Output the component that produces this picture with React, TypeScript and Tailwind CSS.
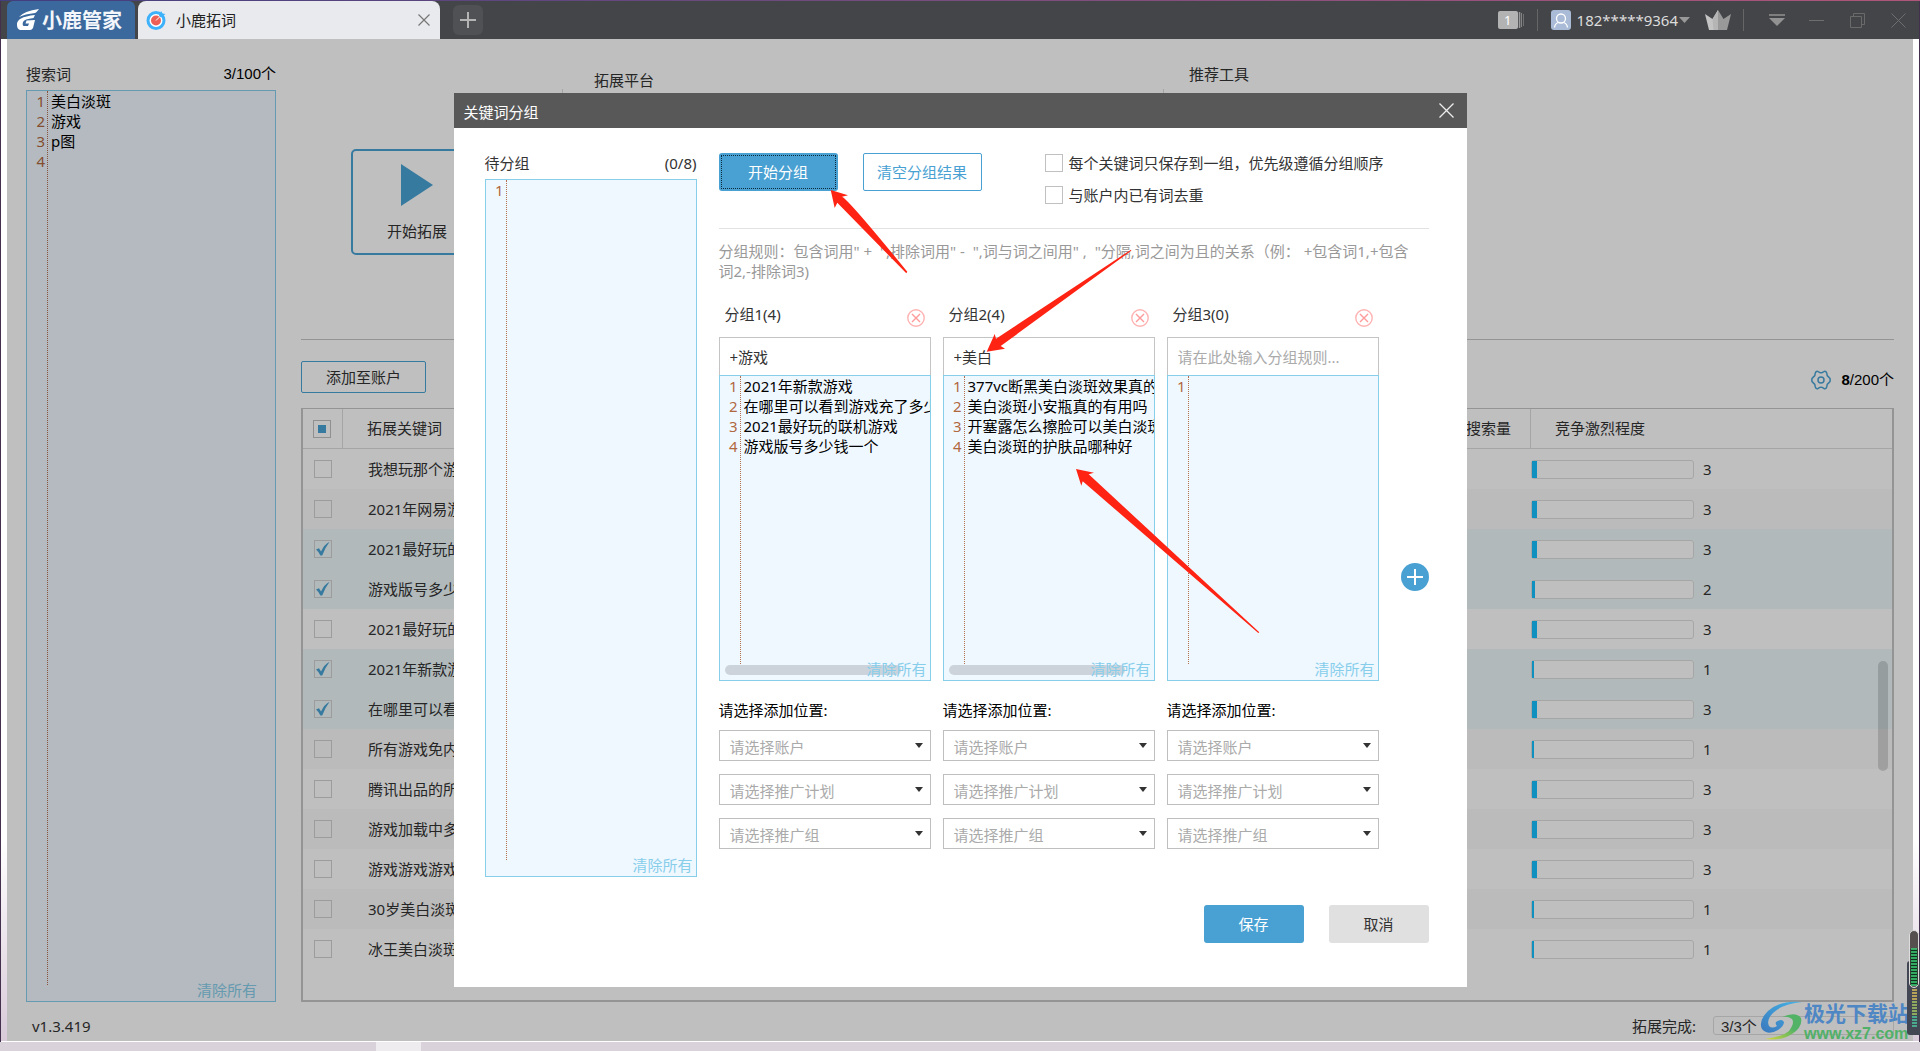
import React from 'react';

type Row = { word: string; level: number; checked: boolean };

const rows: Row[] = [
  { word: '我想玩那个游戏', level: 3, checked: false },
  { word: '2021年网易游戏', level: 3, checked: false },
  { word: '2021最好玩的联机游戏', level: 3, checked: true },
  { word: '游戏版号多少钱一个', level: 2, checked: true },
  { word: '2021最好玩的游戏', level: 3, checked: false },
  { word: '2021年新款游戏', level: 1, checked: true },
  { word: '在哪里可以看到游戏', level: 3, checked: true },
  { word: '所有游戏免内购', level: 1, checked: false },
  { word: '腾讯出品的所有游戏', level: 3, checked: false },
  { word: '游戏加载中多久', level: 3, checked: false },
  { word: '游戏游戏游戏', level: 3, checked: false },
  { word: '30岁美白淡斑', level: 1, checked: false },
  { word: '冰王美白淡斑膏', level: 1, checked: false },
];

const groups = [
  {
    title: '分组1(4)',
    rule: '+游戏',
    words: ['2021年新款游戏', '在哪里可以看到游戏充了多少钱', '2021最好玩的联机游戏', '游戏版号多少钱一个'],
  },
  {
    title: '分组2(4)',
    rule: '+美白',
    words: ['377vc断黑美白淡斑效果真的好吗', '美白淡斑小安瓶真的有用吗', '开塞露怎么擦脸可以美白淡斑吗', '美白淡斑的护肤品哪种好'],
  },
  { title: '分组3(0)', rule: '', words: [] as string[] },
];

const barWidth: Record<number, string> = { 1: 'w-[2px]', 2: 'w-[3px]', 3: 'w-[5px]' };

function Editor({
  label,
  lines,
  count,
  size,
  clearPos = 'right-[3px]',
  scroll = false,
}: {
  label: string;
  lines: string[];
  count: number;
  size: string;
  clearPos?: string;
  scroll?: boolean;
}) {
  return (
    <div className={`relative flex border border-[#87ceeb] bg-[#f0f8ff] pb-4 ${size}`}>
      <div className="w-[21px] shrink-0 border-r border-dotted border-[#b5714f] pr-[2px] text-right leading-5 text-[#b0683f]">
        {Array.from({ length: count }, (_, i) => (
          <div key={i}>{i + 1}</div>
        ))}
      </div>
      <textarea
        aria-label={label}
        wrap="off"
        defaultValue={lines.join('\n')}
        className="min-w-0 flex-1 resize-none overflow-hidden bg-transparent pl-[3px] leading-5 text-black outline-none"
      />
      {scroll && <div className="absolute bottom-[5px] left-[5px] h-[10px] w-[176px] rounded-full bg-[#cdd3da]" />}
      <button className={`absolute bottom-px leading-5 text-[#87ceeb] ${clearPos}`}>清除所有</button>
    </div>
  );
}

function Tick({ label, checked = false }: { label: string; checked?: boolean }) {
  return (
    <span className="relative block size-[18px]">
      <input
        type="checkbox"
        aria-label={label}
        defaultChecked={checked}
        className="peer block size-[18px] appearance-none border border-[#d0d0d0]"
      />
      <svg viewBox="0 0 18 18" className="pointer-events-none absolute inset-0 hidden size-[18px] peer-checked:block">
        <path d="M2 9.4 L5 8.2 L7 11.6 Q10 4.5 15.6 1.7 Q11.5 7 8.2 15.4 L6.4 15.6 Q4.8 11.6 2 9.4Z" fill="#4aa3d4" />
      </svg>
    </span>
  );
}

function TitleBar() {
  return (
    <header className="flex h-[38px] items-end bg-[#444548] pr-[13px] pl-[6px]">
      <div className="flex h-[38px] w-[128px] items-center rounded-t-md bg-[#3b699d] pl-[9px]">
        <svg viewBox="0 0 24 24" className="size-6 shrink-0">
          <path d="M3 9 Q8 3 23 1 Q20 5 19 5 Q9 6 3 9Z" fill="#fff" />
          <path
            d="M1 17 Q0 9 19 7 L17.500 10 Q8 11 7 14 Q6 18 8 18 L12 18 L13 15.500 L9.500 15.500 L10.500 12.500 L19 12 L17 20 Q16 22 14 22 L4 22 Q1 21 1 17Z"
            fill="#fff"
          />
        </svg>
        <span className="ml-[2px] pt-px text-[20px] leading-6 font-bold whitespace-nowrap text-[#f3f6fa]">小鹿管家</span>
      </div>
      <div className="ml-[3px] flex h-[38px] w-[302px] items-center rounded-t-lg bg-[#e9eaee] pr-[10px] pl-2">
        <svg viewBox="0 0 20 20" className="size-5 shrink-0">
          <circle cx="10" cy="10.500" r="8" fill="#fff" stroke="#3db2fb" strokeWidth="3" />
          <circle cx="10" cy="10.500" r="5" fill="#ee5f55" />
          <path d="M10 10.500 L16 4.500" stroke="#fff" strokeWidth="1" />
          <path d="M13 6 L15 1 L16.500 3.500 L19.500 4 L15 7.500Z" fill="#3db2fb" />
        </svg>
        <span className="ml-[10px] leading-5 text-[#222]">小鹿拓词</span>
        <button aria-label="关闭标签" className="ml-auto">
          <svg viewBox="0 0 12 12" className="size-3">
            <path d="M.5 .5 L11.500 11.500 M11.500 .5 L.5 11.500" stroke="#777" strokeWidth="1.200" />
          </svg>
        </button>
      </div>
      <button aria-label="新建标签" className="mb-1 ml-[13px] flex size-[30px] items-center justify-center rounded-md bg-[#505155]">
        <svg viewBox="0 0 16 16" className="size-4">
          <path d="M8 0 V16 M0 8 H16" stroke="#b4b4b4" strokeWidth="2" />
        </svg>
      </button>
      <div className="ml-auto flex h-[38px] items-center">
        <svg viewBox="0 0 26 18" className="h-[18px] w-[26px]">
          <rect width="20" height="18" rx="2" fill="#b3b3b3" />
          <path d="M21.500 1 V17" stroke="#9a9a9a" strokeWidth="1.500" />
          <path d="M23.500 2 V16" stroke="#858585" />
          <path d="M25.500 3 V15" stroke="#707070" />
          <text x="6" y="14" fontSize="13" fill="#fff" fontFamily="Noto Sans">
            1
          </text>
        </svg>
        <i className="ml-[13px] h-[22px] w-px bg-[#666]" />
        <svg viewBox="0 0 20 20" className="ml-[13px] size-5">
          <rect width="20" height="20" rx="3" fill="#a9bbd7" />
          <circle cx="10" cy="8.500" r="4.500" fill="none" stroke="#fff" strokeWidth="1.300" />
          <path d="M3.500 17.500 Q4 13.500 7.500 12.500 M16.500 17.500 Q16 13.500 12.500 12.500" fill="none" stroke="#fff" strokeWidth="1.300" />
        </svg>
        <button className="ml-[6px] flex items-center gap-px leading-5 text-[#dcdcdc]">
          182*****9364
          <svg viewBox="0 0 11 6" className="h-[6px] w-[11px]">
            <path d="M0 0 H11 L5.500 6Z" fill="#999" />
          </svg>
        </button>
        <svg viewBox="0 0 26 20" className="ml-[15px] h-5 w-[26px]">
          <path d="M0 4 L7.500 9 L13 0 L13 20 L4 20Z" fill="#c4c4c4" />
          <path d="M26 4 L18.500 9 L13 0 L13 20 L22 20Z" fill="#999" />
          <path d="M7.500 9 L13 0 L13 20 L8.500 20Z" fill="#b5b5b5" />
        </svg>
        <i className="ml-[12px] h-[22px] w-px bg-[#666]" />
        <button aria-label="菜单" className="ml-[25px]">
          <svg viewBox="0 0 16 12" className="h-3 w-4">
            <path d="M0 1 H16" stroke="#929292" strokeWidth="1.500" />
            <path d="M0 4 H16 L8 12Z" fill="#929292" />
          </svg>
        </button>
        <button aria-label="最小化" className="ml-6 h-[15px] w-[15px]">
          <span className="block h-px w-full bg-[#6e6e6e]" />
        </button>
        <button aria-label="还原" className="ml-[26px]">
          <svg viewBox="0 0 15 15" className="size-[15px]">
            <path d="M.5 3.500 H11.500 V14.500 H.5Z M3.500 3.500 V.5 H14.500 V11.500 H11.500" fill="none" stroke="#6a6a6a" />
          </svg>
        </button>
        <button aria-label="关闭" className="ml-[26px]">
          <svg viewBox="0 0 15 15" className="size-[15px]">
            <path d="M.5 .5 L14.500 14.500 M14.500 .5 L.5 14.500" stroke="#6e6e6e" />
          </svg>
        </button>
      </div>
    </header>
  );
}

function ResultTable() {
  return (
    <div className="relative flex-1 border-2 border-t border-[#c6c6c6]">
      <table className="w-full table-fixed border-separate border-spacing-0 text-[#333]">
        <colgroup>
          <col className="w-10" />
          <col />
          <col className="w-[200px]" />
          <col className="w-[361px]" />
        </colgroup>
        <thead>
          <tr className="h-10 [&>th]:border-b [&>th]:border-[#dcdcdc] [&>th]:font-normal">
            <th className="border-r pl-[10px]">
              <span className="relative block size-[18px]">
                <input type="checkbox" aria-label="全选" className="block size-[18px] appearance-none border border-[#c0c0c0]" />
                <span className="pointer-events-none absolute top-[5px] left-[5px] size-2 bg-[#4aa3d4]" />
              </span>
            </th>
            <th className="pl-6 text-left">拓展关键词</th>
            <th className="border-r pr-[19px] text-right">月均搜索量</th>
            <th className="pl-6 text-left">竞争激烈程度</th>
          </tr>
        </thead>
        <tbody>
          {rows.map((r) => (
            <tr key={r.word} className={`h-10 ${r.checked ? 'bg-[#ecf7fa]' : 'even:bg-[#fafafa]'}`}>
              <td className="pl-[11px]">
                <Tick label={r.word} checked={r.checked} />
              </td>
              <td className="pl-[25px] whitespace-nowrap">{r.word}</td>
              <td />
              <td>
                <div className="flex items-center gap-[9px]">
                  <div className="h-[19px] w-[163px] rounded-[3px] border border-[#dedede] bg-white">
                    <div className={`h-full bg-[#15c0ff] ${barWidth[r.level]}`} />
                  </div>
                  <span className="leading-5">{r.level}</span>
                </div>
              </td>
            </tr>
          ))}
        </tbody>
      </table>
      <div className="absolute top-[252px] right-1 h-[110px] w-[10px] rounded-full bg-black/15" />
    </div>
  );
}

function Picker({ label }: { label: string }) {
  return (
    <div className="relative">
      <select
        aria-label={label}
        className="block h-[31px] w-full appearance-none border border-[#bfbfbf] bg-white pt-[3px] pl-[10px] text-[#aaa] outline-none"
      >
        <option>{label}</option>
      </select>
      <svg viewBox="0 0 8 5" className="pointer-events-none absolute top-[13px] right-2 h-[5px] w-2">
        <path d="M0 0 H8 L4 5Z" fill="#333" />
      </svg>
    </div>
  );
}

function GroupDialog() {
  return (
    <div role="dialog" aria-label="关键词分组" className="w-full max-w-[1013px] bg-white text-[#333]">
      <div className="flex h-[35px] items-center justify-between bg-[#585858] pr-[13px] pl-[10px] text-white">
        <h2 className="pt-[2px] leading-5">关键词分组</h2>
        <button aria-label="关闭对话框">
          <svg viewBox="0 0 15 15" className="size-[15px]">
            <path d="M.5 .5 L14.500 14.500 M14.500 .5 L.5 14.500" stroke="#eee" strokeWidth="1.300" />
          </svg>
        </button>
      </div>
      <div className="pt-[25px] pr-[38px] pb-11 pl-[31px]">
        <div className="flex gap-[22px]">
          <div className="flex w-[212px] shrink-0 flex-col">
            <div className="flex h-[26px] justify-between leading-5">
              <span>待分组</span>
              <span>(0/8)</span>
            </div>
            <Editor label="待分组" lines={[]} count={1} size="min-h-[698px] flex-1" />
          </div>
          <div className="min-w-0 flex-1">
            <div className="flex h-[76px] items-start border-b border-[#e2e2e2]">
              <button className="h-[38px] w-[119px] rounded-[3px] bg-[#48a1d2] p-[2px] text-white">
                <span className="flex h-full items-center justify-center border border-dotted border-[#0d2a3a]">开始分组</span>
              </button>
              <button className="ml-[25px] h-[38px] w-[119px] rounded-[2px] border border-[#48a1d2] text-[#48a1d2]">清空分组结果</button>
              <div className="ml-[63px] flex flex-col gap-3">
                {['每个关键词只保存到一组，优先级遵循分组顺序', '与账户内已有词去重'].map((t) => (
                  <label key={t} className="flex h-5 items-center gap-[6px] whitespace-nowrap">
                    <input type="checkbox" className="size-[18px] appearance-none border border-[#c0c0c0]" />
                    {t}
                  </label>
                ))}
              </div>
            </div>
            <p className="mt-3 leading-5 whitespace-nowrap text-[#999]">
              分组规则：包含词用" +&nbsp; ",排除词用" -&nbsp; ",词与词之间用" ,&nbsp; "分隔,词之间为且的关系（例：&nbsp;+包含词1,+包含
              <br />
              词2,-排除词3)
            </p>
            <div className="mt-[23px] flex">
              <div className="flex gap-3">
                {groups.map((g) => (
                  <section key={g.title} className="flex w-[212px] flex-col">
                    <div className="flex h-[33px] items-start justify-between pr-[6px] pl-[6px]">
                      <h3 className="leading-5">{g.title}</h3>
                      <button aria-label={`删除${g.title}`} className="mt-[5px]">
                        <svg viewBox="0 0 18 18" className="size-[18px]">
                          <circle cx="9" cy="9" r="8.200" fill="none" stroke="#ffb3b3" strokeWidth="1.400" />
                          <path d="M5 5 L13 13 M13 5 L5 13" stroke="#ff9a9a" strokeWidth="1.400" />
                        </svg>
                      </button>
                    </div>
                    <input
                      aria-label={`${g.title}规则`}
                      defaultValue={g.rule}
                      placeholder="请在此处输入分组规则..."
                      className="h-[38px] w-full border border-b-0 border-[#c4c4c4] pl-[10px] outline-none placeholder:text-[#aaa]"
                    />
                    <Editor
                      label={`${g.title}关键词`}
                      lines={g.words}
                      count={Math.max(1, g.words.length)}
                      size="h-[306px]"
                      scroll={g.words.length > 0}
                    />
                    <div className="mt-[19px] mb-[10px] leading-5 text-black">请选择添加位置:</div>
                    <div className="flex flex-col gap-[13px]">
                      <Picker label="请选择账户" />
                      <Picker label="请选择推广计划" />
                      <Picker label="请选择推广组" />
                    </div>
                  </section>
                ))}
              </div>
              <button aria-label="添加分组" className="ml-auto self-center">
                <svg viewBox="0 0 28 28" className="size-7">
                  <circle cx="14" cy="14" r="14" fill="#48a1d2" />
                  <path d="M14 6 V22 M6 14 H22" stroke="#fff" strokeWidth="2" />
                </svg>
              </button>
            </div>
          </div>
        </div>
        <div className="mt-7 flex justify-end gap-[25px]">
          <button className="h-[38px] w-[100px] rounded-[3px] bg-[#48a1d2] text-white">保存</button>
          <button className="h-[38px] w-[100px] rounded-[3px] bg-[#e0e0e0]">取消</button>
        </div>
      </div>
    </div>
  );
}

function Arrows() {
  return (
    <svg viewBox="454 93 1013 894" className="pointer-events-none absolute inset-0 size-full" fill="#ff2313">
      <path d="M830.700 190 L848 195.300 L842 196.700 Q848 199 907.300 271.700 L906.300 273.300 L837.300 202.700 L834.700 208Z" />
      <path d="M986.700 351.700 L994.700 334 L996 338.700 L1131 249.700 L1131.300 250.700 L1000.700 346 L1005 348.700Z" />
      <path d="M1076 469 L1094 472.700 L1088.700 474.300 L1259.300 632.300 L1258.300 632.900 L1082.700 481.300 L1081.300 485.700Z" />
    </svg>
  );
}

function Watermark() {
  return (
    <div className="pointer-events-none absolute right-[11px] bottom-0 flex h-[42px] items-center">
      <svg viewBox="0 0 42 42" className="size-[42px]">
        <defs>
          <linearGradient id="wmBlue" x1="0" y1="1" x2="1" y2="0">
            <stop offset="0" stopColor="#3a78bd" />
            <stop offset="1" stopColor="#45b4e6" />
          </linearGradient>
          <linearGradient id="wmGreen" x1="0" y1="1" x2="1" y2="0">
            <stop offset="0" stopColor="#d5d83c" />
            <stop offset=".6" stopColor="#52b266" />
          </linearGradient>
        </defs>
        <path
          d="M42 2 Q20 0 8 11 Q-2 21 2 29 Q8 36 18 30 Q24 26 24 22 Q22 18 16 22 Q15 24 17 26 Q12 29 9 26 Q6 20 13 13 Q22 4 42 2Z"
          fill="url(#wmBlue)"
        />
        <path d="M22 17 Q36 11 41 18 Q43 27 32 34 Q22 41 5 39 Q22 37 29 31 Q35 23 32 19 Q28 16 22 17Z" fill="url(#wmGreen)" />
      </svg>
      <div className="ml-[2px] pt-[3px] font-bold whitespace-nowrap">
        <div className="text-[21px] leading-[22px] text-[#4e87c4]">极光下载站</div>
        <div className="font-['Liberation_Sans',sans-serif] text-[16px] leading-5 text-[#51b068]">www.xz7.com</div>
      </div>
    </div>
  );
}

function Meter() {
  return (
    <svg viewBox="0 0 13 106" className="pointer-events-none absolute right-0 bottom-[6px] h-[106px] w-[13px]">
      <rect x="0" y="31" width="14" height="74" rx="3" fill="#434754" />
      <rect x="2.500" y=".5" width="9" height="57" rx="4.500" fill="#55504f" stroke="#ddd" />
      <rect x="3.500" y="19" width="7" height="36" fill="#12301f" />
      {Array.from({ length: 13 }, (_, i) => (
        <path key={i} d={`M4 ${19 + i * 3} h6`} stroke="#3fd37a" strokeWidth="1.500" />
      ))}
      {Array.from({ length: 13 }, (_, i) => (
        <path key={i} d={`M5 ${60 + i * 3} h5`} stroke={i < 4 ? '#d8c05a' : i < 9 ? '#a5cc62' : '#4cc9a0'} strokeWidth="1.500" />
      ))}
    </svg>
  );
}

export default function App() {
  return (
    <div className="relative flex min-h-screen flex-col bg-[#dad2da] font-['Noto_Sans','Noto_Sans_CJK_SC',sans-serif] text-[15px] text-[#333]">
      <div className="h-px bg-linear-to-r from-[#413e7e] to-[#b0557a]" />
      <div className="flex flex-1 flex-col border-r border-l border-[#43304f]">
        <TitleBar />
        <div className="flex flex-1 flex-col border-b border-white bg-linear-to-b from-white from-80% to-[#d8cad9] px-[6px]">
          <div className="relative flex flex-1 flex-col bg-white px-[19px]">
            <div className="flex flex-1 gap-[25px]">
              <aside className="flex w-[250px] shrink-0 flex-col">
                <div className="flex items-center justify-between pt-[25px] pb-[6px] leading-5">
                  <span>搜索词</span>
                  <span className="font-['Liberation_Sans','Noto_Sans_CJK_SC',sans-serif] text-black">3/100个</span>
                </div>
                <Editor label="搜索词" lines={['美白淡斑', '游戏', 'p图']} count={4} size="flex-1" clearPos="right-[18px]" />
              </aside>
              <main className="flex min-w-0 flex-1 flex-col">
                <div className="flex h-[301px] border-b border-[#c6c6c6]">
                  <div className="w-[261px] pt-[110px] pl-[50px]">
                    <button className="flex h-[106px] w-[132px] flex-col items-center gap-[15px] rounded-[5px] border-2 border-[#4aa3d4] pt-[13px]">
                      <svg viewBox="0 0 32 42" className="h-[42px] w-8">
                        <path d="M0 0 L32 21 L0 42Z" fill="#4aa3d4" />
                      </svg>
                      <span className="leading-5">开始拓展</span>
                    </button>
                  </div>
                  <i className="mt-[50px] w-px bg-[#dcdcdc]" />
                  <div className="w-[600px] pt-[31px] pl-[31px] leading-5">拓展平台</div>
                  <i className="mt-[50px] w-px bg-[#dcdcdc]" />
                  <div className="pt-[25px] pl-[25px] leading-5">推荐工具</div>
                </div>
                <div className="flex h-[68px] items-start justify-between pt-[21px]">
                  <button className="h-8 w-[125px] rounded-[2px] border border-[#4aa3d4]">添加至账户</button>
                  <div className="flex h-[38px] items-center font-['Liberation_Sans','Noto_Sans_CJK_SC',sans-serif] text-black">
                    <button aria-label="设置" className="mr-[10px]">
                      <svg viewBox="0 0 20 20" className="size-5" fill="none" stroke="#4aa3d4" strokeWidth="1.500">
                        <path d="M5 1.800 Q6 .8 7.200 1.600 L8.800 2.600 Q10 3 11.200 2.600 L12.800 1.600 Q14 .8 15 1.800 L15.800 3.200 L16.200 5.600 L18.200 7.600 Q19.600 8.800 19 10 Q19.600 11.200 18.200 12.400 L16.200 14.400 L15.800 16.800 L15 18.200 Q14 19.200 12.800 18.400 L11.200 17.400 Q10 17 8.800 17.400 L7.200 18.400 Q6 19.200 5 18.200 L4.200 16.800 L3.800 14.400 L1.800 12.400 Q.4 11.200 1 10 Q.4 8.800 1.800 7.600 L3.800 5.600 L4.200 3.200Z" />
                        <circle cx="10" cy="10" r="3" />
                      </svg>
                    </button>
                    <b>8</b>/200个
                  </div>
                </div>
                <ResultTable />
              </main>
            </div>
            <footer className="flex h-[39px] items-center justify-between pt-[7px] pl-[6px]">
              <span className="pt-px leading-5">v1.3.419</span>
              <div className="flex items-center leading-5">
                <span className="pt-px">拓展完成:</span>
                <span className="ml-[17px] flex h-[19px] w-[181px] items-center rounded-[3px] border border-[#dedede] pt-[3px] pl-[7px] font-['Liberation_Sans','Noto_Sans_CJK_SC',sans-serif]">
                  3/3个
                </span>
              </div>
            </footer>
            <div className="absolute inset-0 flex items-center justify-center bg-black/25">
              <div className="relative w-full max-w-[1013px]">
                <GroupDialog />
                <Arrows />
              </div>
            </div>
          </div>
        </div>
      </div>
      <div className="flex h-[9px]">
        <i className="ml-[376px] w-[45px] bg-[#efecf0]" />
      </div>
      <div className="pointer-events-none absolute inset-x-0 top-0 bottom-[9px]">
        <Watermark />
        <Meter />
      </div>
    </div>
  );
}
